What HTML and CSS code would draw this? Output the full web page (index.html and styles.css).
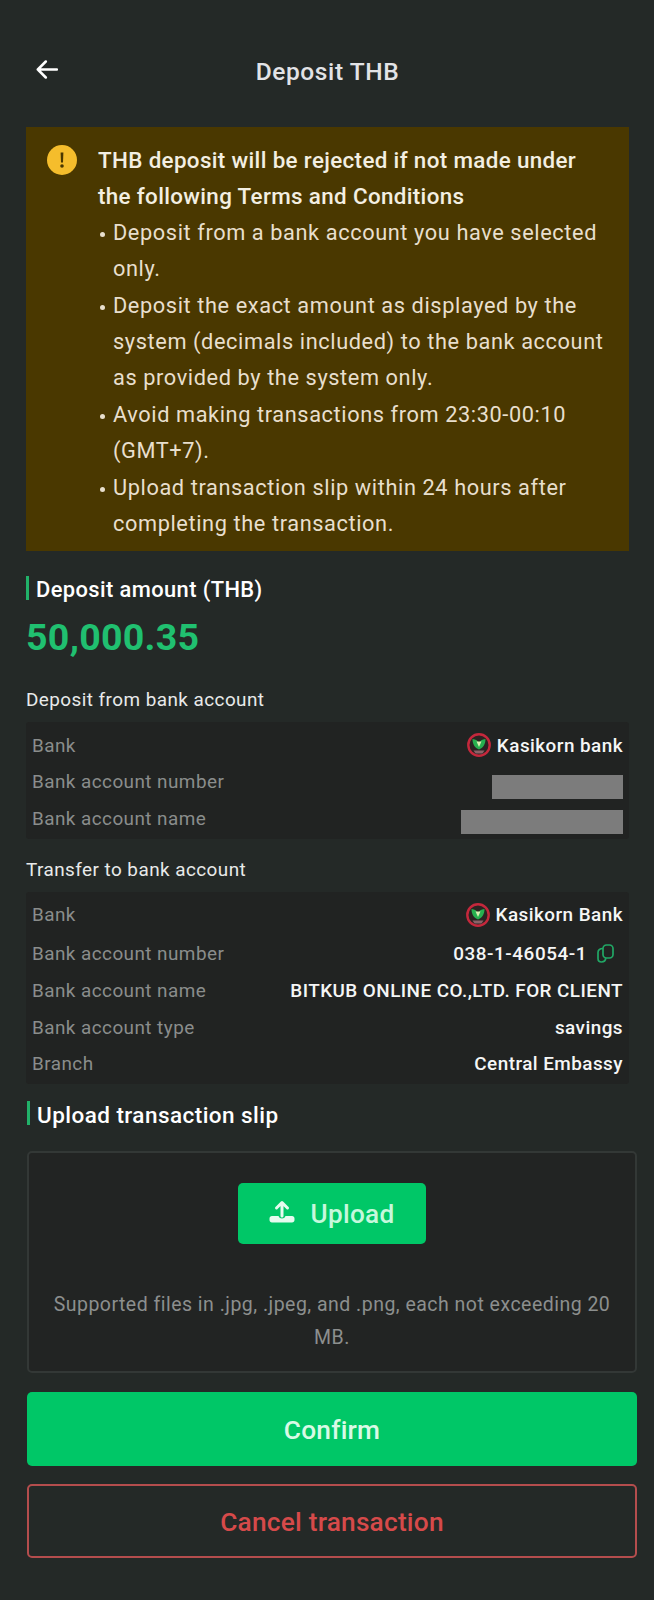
FILE: index.html
```html
<!DOCTYPE html>
<html lang="en">
<head>
<meta charset="utf-8">
<title>Deposit THB</title>
<link rel="stylesheet" href="styles.css">
</head>
<body>
<main class="page">
  <header class="topbar">
    <svg class="back" viewBox="0 0 22 19" aria-hidden="true"><path d="M21 9.500H1.800M9.800 1.500l-8 8 8 8"/></svg>
    <h1 class="title">Deposit THB</h1>
  </header>

  <section class="notice">
    <svg class="notice-icon" viewBox="0 0 30 30" aria-hidden="true"><circle cx="15" cy="15" r="15" fill="#f5bd2c"/><path d="M13.600 7.500h2.800l-.4 10h-2z" fill="#4a3800"/><circle cx="15" cy="21" r="1.800" fill="#4a3800"/></svg>
    <div class="notice-body">
      <p class="notice-title">THB deposit will be rejected if not made under the following Terms and Conditions</p>
      <ul class="notice-list">
        <li>Deposit from a bank account you have selected only.</li>
        <li>Deposit the exact amount as displayed by the system (decimals included) to the bank account as provided by the system only.</li>
        <li>Avoid making transactions from 23:30-00:10 (GMT+7).</li>
        <li>Upload transaction slip within 24 hours after completing the transaction.</li>
      </ul>
    </div>
  </section>

  <h2 class="heading">Deposit amount (THB)</h2>
  <div class="amount">50,000.35</div>

  <h3 class="label label-from">Deposit from bank account</h3>
  <dl class="panel panel-from">
    <div class="row"><dt>Bank</dt><dd class="bank">
      <svg class="bank-logo" viewBox="0 0 24 24" aria-hidden="true"><circle cx="12" cy="12" r="10.700" fill="#2a2422" stroke="#c4283c" stroke-width="2.400"/><path d="M12 16.500C8 15 5.500 11.500 5.500 6c3.500.3 5.500 1.700 6.500 4.500C13 7.700 15 6.300 18.500 6c0 5.500-2.500 9-6.500 10.500z" fill="#27b04f"/><path d="M12 14 9.500 8.500h5z" fill="#d7efb0"/><path d="M6.500 17.500h11l-2 3h-7z" fill="#8a6268"/></svg>
      Kasikorn bank</dd></div>
    <div class="row"><dt>Bank account number</dt><dd><span class="redact redact-number"></span></dd></div>
    <div class="row"><dt>Bank account name</dt><dd><span class="redact redact-name"></span></dd></div>
  </dl>

  <h3 class="label label-to">Transfer to bank account</h3>
  <dl class="panel panel-to">
    <div class="row"><dt>Bank</dt><dd class="bank">
      <svg class="bank-logo" viewBox="0 0 24 24" aria-hidden="true"><circle cx="12" cy="12" r="10.700" fill="#2a2422" stroke="#c4283c" stroke-width="2.400"/><path d="M12 16.500C8 15 5.500 11.500 5.500 6c3.500.3 5.500 1.700 6.500 4.500C13 7.700 15 6.300 18.500 6c0 5.500-2.500 9-6.500 10.500z" fill="#27b04f"/><path d="M12 14 9.500 8.500h5z" fill="#d7efb0"/><path d="M6.500 17.500h11l-2 3h-7z" fill="#8a6268"/></svg>
      Kasikorn Bank</dd></div>
    <div class="row"><dt>Bank account number</dt><dd class="number">038-1-46054-1
      <svg class="copy" viewBox="0 0 17 19" aria-hidden="true"><rect x="6" y="1" width="10" height="13" rx="3.500"/><path d="M6 4.500C2.800 4.500 1 6 1 8.500v6C1 17 2.500 18 4.500 18c2.500 0 4-1.200 4.300-3.800"/></svg></dd></div>
    <div class="row"><dt>Bank account name</dt><dd>BITKUB ONLINE CO.,LTD. FOR CLIENT</dd></div>
    <div class="row"><dt>Bank account type</dt><dd>savings</dd></div>
    <div class="row"><dt>Branch</dt><dd>Central Embassy</dd></div>
  </dl>

  <div class="inset">
    <h2 class="heading heading-upload">Upload transaction slip</h2>
    <div class="dropzone">
      <button class="upload" type="button">
        <svg class="upload-icon" viewBox="0 0 26 24" aria-hidden="true"><path class="upload-arrow" d="M13 16V3M7.500 8 13 2.500 18.500 8"/><path class="upload-tray" d="M3 16h6.500c.8 1.800 2 2.500 3.500 2.500s2.700-.7 3.500-2.500H23c1.500 0 2.500 1 2.500 2.500v1.500c0 1.500-1 2.500-2.500 2.500H3C1.500 22.500.5 21.500.5 20v-1.500C.5 17 1.500 16 3 16z"/></svg>
        Upload
      </button>
      <p class="hint">Supported files in .jpg, .jpeg, and .png, each not exceeding 20 MB.</p>
    </div>
    <button class="btn btn-confirm" type="button">Confirm</button>
    <button class="btn btn-cancel" type="button">Cancel transaction</button>
  </div>
</main>
</body>
</html>
```
FILE: styles.css
```css
* { box-sizing: border-box; }
html, body { margin: 0; padding: 0; }
body {
  width: 654px;
  height: 1600px;
  overflow: hidden;
  background: #242927;
  color: #fff;
  font-family: Roboto, "Noto Sans", sans-serif;
}
.page { padding: 0 25px 0 26px; }

.topbar {
  position: relative;
  height: 127px;
  padding-top: 54px;
}
.back {
  position: absolute;
  left: 10px;
  top: 60px;
  width: 22px;
  height: 19px;
  fill: none;
  stroke: #fff;
  stroke-width: 2.500;
  stroke-linecap: round;
  stroke-linejoin: round;
}
.title {
  margin: 0;
  text-align: center;
  font-size: 24.500px;
  line-height: 36px;
  font-weight: 500;
  letter-spacing: 0.6px;
  color: #e2e3e6;
}

.notice {
  display: flex;
  gap: 21px;
  height: 424px;
  padding: 15px 20px 0 21px;
  background: #4a3800;
  color: #e8dfcd;
  font-size: 21.750px;
  line-height: 36.400px;
  letter-spacing: 0.6px;
}
.notice-icon { flex: none; width: 30px; height: 30px; margin-top: 3px; }
.notice-title { margin: 0; font-size: 22.400px; font-weight: 500; color: #f3efe2; letter-spacing: 0.35px; }
.notice-list { margin: 0; padding: 0; list-style: none; }
.notice-list li { position: relative; padding-left: 15px; }
.notice-list li::before {
  content: "";
  position: absolute;
  left: 2px;
  top: 17px;
  width: 5px;
  height: 5px;
  border-radius: 50%;
  background: #e8dfcd;
}

.heading {
  margin: 25px 0 0;
  height: 24px;
  padding-left: 7px;
  border-left: 3px solid #21b169;
  font-size: 21.900px;
  line-height: 27px;
  font-weight: 500;
  letter-spacing: 0.4px;
  color: #fff;
}
.amount {
  margin-top: 15px;
  font-size: 37.500px;
  line-height: 44px;
  font-weight: 700;
  letter-spacing: 0.3px;
  color: #20c070;
}
.label {
  margin: 0;
  font-size: 18.900px;
  line-height: 24px;
  font-weight: 400;
  letter-spacing: 0.45px;
  color: #e8eaea;
}
.label-from { margin-top: 29px; }
.label-to { margin-top: 19px; }

.panel {
  margin: 10px 0 0;
  padding: 5px 6px 2px 6px;
  background: #212322;
  border-radius: 3px;
  width: 603px;
  font-size: 18.900px;
  letter-spacing: 0.45px;
}
.row {
  display: flex;
  align-items: center;
  justify-content: space-between;
  height: 36.500px;
}
.panel dt { color: #8a8d8c; }
.panel dd {
  margin: 0;
  display: flex;
  align-items: center;
  font-weight: 500;
  color: #f5f6f6;
}
.bank-logo { width: 24px; height: 24px; margin-right: 6px; }
.number { padding-right: 9px; letter-spacing: 0.55px; }
.copy {
  width: 17px;
  height: 19px;
  margin-left: 10px;
  fill: none;
  stroke: #21a765;
  stroke-width: 1.700;
}
.redact { display: block; height: 24px; background: #7c7c7c; }
.redact-number { width: 131px; margin-top: 10px; }
.redact-name { width: 162px; margin-top: 8px; }
.panel-to { padding-top: 5px; padding-bottom: 1.500px; }
.panel-to .row:first-child { margin-bottom: 2px; }
.panel-to .row:nth-child(2) { margin-bottom: 1px; }

.inset { margin-left: 1px; width: 610px; }
.heading-upload { margin-top: 17px; padding-left: 7px; font-size: 22.500px; line-height: 29px; letter-spacing: 0.45px; }

.dropzone {
  margin-top: 26px;
  height: 222px;
  padding-top: 30px;
  background: #222423;
  border: 2px solid #333836;
  border-radius: 5px;
  text-align: center;
}
.upload {
  display: inline-flex;
  align-items: center;
  justify-content: center;
  gap: 15px;
  width: 188px;
  height: 61px;
  padding-top: 3px;
  border: 0;
  border-radius: 5px;
  background: #00c767;
  color: #c6f8dc;
  font: 500 26.200px Roboto, sans-serif;
  letter-spacing: 0.3px;
}
.upload-icon { width: 26px; height: 24px; margin-top: -4px; }
.upload-arrow { fill: none; stroke: #e6fbef; stroke-width: 3; stroke-linecap: round; stroke-linejoin: round; }
.upload-tray { fill: #e6fbef; }
.hint {
  margin: 44px 16px 0;
  font-size: 19.500px;
  line-height: 33.500px;
  letter-spacing: 0.48px;
  color: #8c8f8e;
}

.btn {
  display: block;
  width: 100%;
  padding-top: 4px;
  border-radius: 5px;
  font: 500 26.300px Roboto, sans-serif;
  letter-spacing: 0.2px;
}
.btn-confirm {
  margin-top: 19px;
  height: 74px;
  border: 0;
  background: #00c767;
  color: #d8fae6;
}
.btn-cancel {
  margin-top: 18px;
  height: 74px;
  border: 2px solid #b44d4d;
  background: transparent;
  color: #d64a4a;
}
```
